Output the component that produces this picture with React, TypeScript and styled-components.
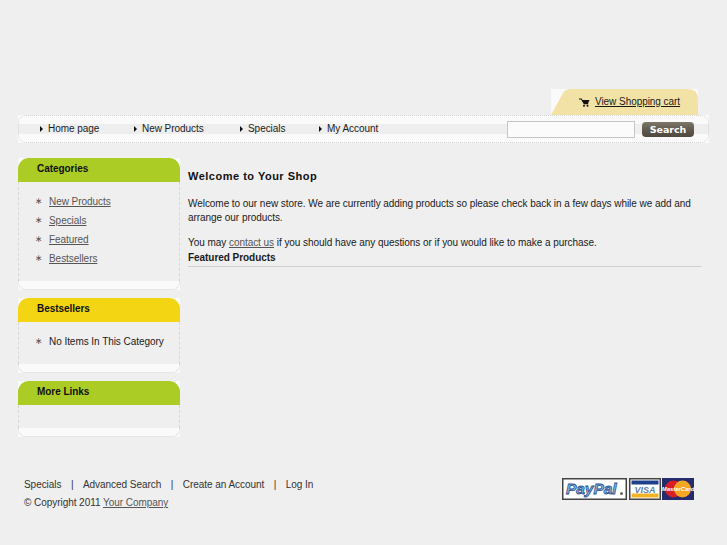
import React from "react";
import styled, { createGlobalStyle } from "styled-components";

const Global = createGlobalStyle`
  html, body { margin: 0; padding: 0; background: #efefef; }
  body { font: 10px/14px "Liberation Sans", Arial, sans-serif; color: #1a1a1a; letter-spacing: -0.05px; }
`;

const Page = styled.div`
  width: 727px;
  height: 545px;
  overflow: hidden;
  padding: 89px 18px 0;
  box-sizing: border-box;
`;

const CartRow = styled.div`
  display: flex;
  justify-content: flex-end;
  padding-right: 11px;
`;

const CartBack = styled.div`
  width: 147px;
  height: 26px;
  background: #fafafa;
`;

const CartShape = styled.div`
  height: 100%;
  box-sizing: border-box;
  display: flex;
  align-items: center;
  padding: 0 0 0 28px;
  gap: 5px;
  background: #f3e2a5;
  clip-path: path("M0 26 L12 4 Q14 0 20 0 L137 0 Q147 0 147 10 L147 26 Z");
`;

const CartLink = styled.a`
  color: #1a1a1a;
  text-decoration: underline;
`;

const NavBar = styled.div`
  height: 28px;
  background: linear-gradient(#fafafa 9px, #eeeeee 9px, #eeeeee 19px, #fafafa 19px);
`;

const NavInner = styled.div`
  height: 100%;
  box-sizing: border-box;
  border: 1px dotted #d4d4d4;
  border-radius: 8px;
  display: flex;
  align-items: center;
`;

const NavLinks = styled.div`
  display: flex;
  width: 488px;
  flex: none;
  padding-bottom: 1px;
`;

const NavItem = styled.a<{ $w: number }>`
  width: ${(p) => p.$w}px;
  flex: none;
  display: flex;
  align-items: center;
  gap: 5px;
  color: #1a1a1a;
  &:first-child { margin-left: 21px; }
`;

const Arrow = styled.i`
  width: 0;
  height: 0;
  border-left: 3px solid #111;
  border-top: 3px solid transparent;
  border-bottom: 3px solid transparent;
`;

const SearchInput = styled.div`
  width: 128px;
  height: 17px;
  box-sizing: border-box;
  background: #fbfbfb;
  border: 1px solid #c6c6c6;
  flex: none;
`;

const SearchButton = styled.div`
  width: 52px;
  height: 15px;
  margin-left: 7px;
  border-radius: 4px;
  background: linear-gradient(#7d7669, #5f584c 55%, #4e483e);
  color: #fff;
  font: bold 9.5px/15px "DejaVu Sans", sans-serif;
  text-align: center;
  flex: none;
`;

const Main = styled.div`
  display: flex;
  margin-top: 15px;
  gap: 8px;
`;

const Sidebar = styled.div`
  width: 162px;
  flex: none;
  display: flex;
  flex-direction: column;
  gap: 8px;
`;

const Box = styled.div`
  background: #fafafa;
`;

const BoxHead = styled.div<{ $c: string }>`
  height: 24px;
  box-sizing: border-box;
  background: ${(p) => p.$c};
  border-radius: 11px 11px 0 0;
  padding: 4px 0 0 19px;
  font-weight: bold;
  color: #111;
`;

const BoxBody = styled.div<{ $h: number }>`
  height: ${(p) => p.$h}px;
  box-sizing: border-box;
  background: #efefef;
  border-left: 1px dashed #d8d8d8;
  border-right: 1px dashed #d8d8d8;
  padding: 10px 0 0 16px;
`;

const BoxFoot = styled.div`
  height: 9px;
  box-sizing: border-box;
  background: #fafafa;
  border: 1px dotted #d0d0d0;
  border-top: 0;
  border-radius: 0 0 8px 8px;
`;

const SideRow = styled.div`
  display: flex;
  height: 19px;
  align-items: center;
  gap: 5px;
`;

const Star = styled.span`
  width: 9px;
  color: #555;
  font: 9px/10px "DejaVu Sans", sans-serif;
  margin-bottom: 2px;
`;

const SideLink = styled.a<{ $plain?: boolean }>`
  color: ${(p) => (p.$plain ? "#1a1a1a" : "#555")};
  text-decoration: ${(p) => (p.$plain ? "none" : "underline")};
`;

const Content = styled.div`
  flex: 1;
  padding: 11px 8px 0 0;
`;

const Title = styled.div`
  font-size: 11px;
  font-weight: bold;
  line-height: 15px;
  letter-spacing: 0.5px;
  color: #111;
  margin-bottom: 13px;
`;

const Para = styled.div`
  margin-bottom: 11px;
  & + & { margin-bottom: 2px; }
`;

const Tiny = styled.a`
  color: #555;
  text-decoration: underline;
`;

const Featured = styled.div`
  font-weight: bold;
  height: 12px;
  line-height: 12px;
  padding-bottom: 2px;
  border-bottom: 1px solid #cfcfcf;
`;

const Footer = styled.div`
  display: flex;
  justify-content: space-between;
  margin-top: 41px;
  padding: 0 15px 0 6px;
`;

const FootLinks = styled.div`
  display: flex;
  flex-direction: column;
  gap: 4px;
  color: #333;
`;

const FootRow = styled.div`
  display: flex;
  gap: 9.5px;
`;

const Logos = styled.div`
  display: flex;
  gap: 1px;
`;

const CartIcon = () => (
  <svg width="11" height="9" viewBox="0 0 11 9">
    <path d="M0 0.5h2.5l1 1.5h7l-1.3 3H4.2L2 1.5H0z" fill="#111" />
    <path d="M4.2 5h5v1.2h-4.4z" fill="#111" />
    <circle cx="5" cy="7.8" r="1" fill="#111" />
    <circle cx="8.5" cy="7.8" r="1" fill="#111" />
  </svg>
);

const PayPal = () => (
  <svg width="66" height="22" viewBox="0 0 66 22">
    <rect x="0.75" y="0.75" width="63.5" height="20.5" fill="#fff" stroke="#444" strokeWidth="1.5" />
    <text x="4" y="16" fontFamily="Liberation Sans" fontSize="15.5" fontWeight="bold" fontStyle="italic" fill="#8fb3df" stroke="#25508f" strokeWidth="0.8">PayPal</text>
    <circle cx="59.5" cy="15.5" r="1.5" fill="#666" />
  </svg>
);

const Visa = () => (
  <svg width="32" height="22" viewBox="0 0 32 22">
    <rect x="0.75" y="0.75" width="30.5" height="20.5" fill="#fff" stroke="#444" strokeWidth="1.5" />
    <rect x="2.5" y="2.5" width="27" height="4" fill="#1f3f8a" />
    <rect x="2.5" y="15.5" width="27" height="4" fill="#f2b324" />
    <text x="16" y="14.5" textAnchor="middle" fontFamily="Liberation Sans" fontSize="9" fontWeight="bold" fontStyle="italic" fill="#5b80b8">VISA</text>
  </svg>
);

const MasterCard = () => (
  <svg width="32" height="22" viewBox="0 0 32 22">
    <rect width="32" height="22" fill="#262b6e" />
    <circle cx="11.5" cy="11" r="8.5" fill="#d81f26" />
    <circle cx="20.5" cy="11" r="8.5" fill="#f5a623" />
    <text x="16" y="13" textAnchor="middle" fontFamily="Liberation Sans" fontSize="6" fontWeight="bold" fontStyle="italic" fill="#fff">MasterCard</text>
  </svg>
);

export default function App() {
  return (
    <Page>
      <Global />
      <CartRow>
        <CartBack>
          <CartShape>
            <CartIcon />
            <CartLink>View Shopping cart</CartLink>
          </CartShape>
        </CartBack>
      </CartRow>
      <NavBar>
        <NavInner>
          <NavLinks>
            <NavItem $w={94}><Arrow />Home page</NavItem>
            <NavItem $w={106}><Arrow />New Products</NavItem>
            <NavItem $w={79}><Arrow />Specials</NavItem>
            <NavItem $w={100}><Arrow />My Account</NavItem>
          </NavLinks>
          <SearchInput />
          <SearchButton>Search</SearchButton>
        </NavInner>
      </NavBar>
      <Main>
        <Sidebar>
          <Box>
            <BoxHead $c="#abcb25">Categories</BoxHead>
            <BoxBody $h={99}>
              <SideRow><Star>∗</Star><SideLink>New Products</SideLink></SideRow>
              <SideRow><Star>∗</Star><SideLink>Specials</SideLink></SideRow>
              <SideRow><Star>∗</Star><SideLink>Featured</SideLink></SideRow>
              <SideRow><Star>∗</Star><SideLink>Bestsellers</SideLink></SideRow>
            </BoxBody>
            <BoxFoot />
          </Box>
          <Box>
            <BoxHead $c="#f3d513">Bestsellers</BoxHead>
            <BoxBody $h={42}>
              <SideRow><Star>∗</Star><SideLink $plain>No Items In This Category</SideLink></SideRow>
            </BoxBody>
            <BoxFoot />
          </Box>
          <Box>
            <BoxHead $c="#abcb25">More Links</BoxHead>
            <BoxBody $h={23} />
            <BoxFoot />
          </Box>
        </Sidebar>
        <Content>
          <Title>Welcome to Your Shop</Title>
          <Para>Welcome to our new store. We are currently adding products so please check back in a few days while we add and arrange our products.</Para>
          <Para>You may <Tiny>contact us</Tiny> if you should have any questions or if you would like to make a purchase.</Para>
          <Featured>Featured Products</Featured>
        </Content>
      </Main>
      <Footer>
        <FootLinks>
          <FootRow>
            <span>Specials</span><span>|</span><span>Advanced Search</span><span>|</span><span>Create an Account</span><span>|</span><span>Log In</span>
          </FootRow>
          <div>© Copyright 2011 <Tiny>Your Company</Tiny></div>
        </FootLinks>
        <Logos>
          <PayPal />
          <Visa />
          <MasterCard />
        </Logos>
      </Footer>
    </Page>
  );
}
